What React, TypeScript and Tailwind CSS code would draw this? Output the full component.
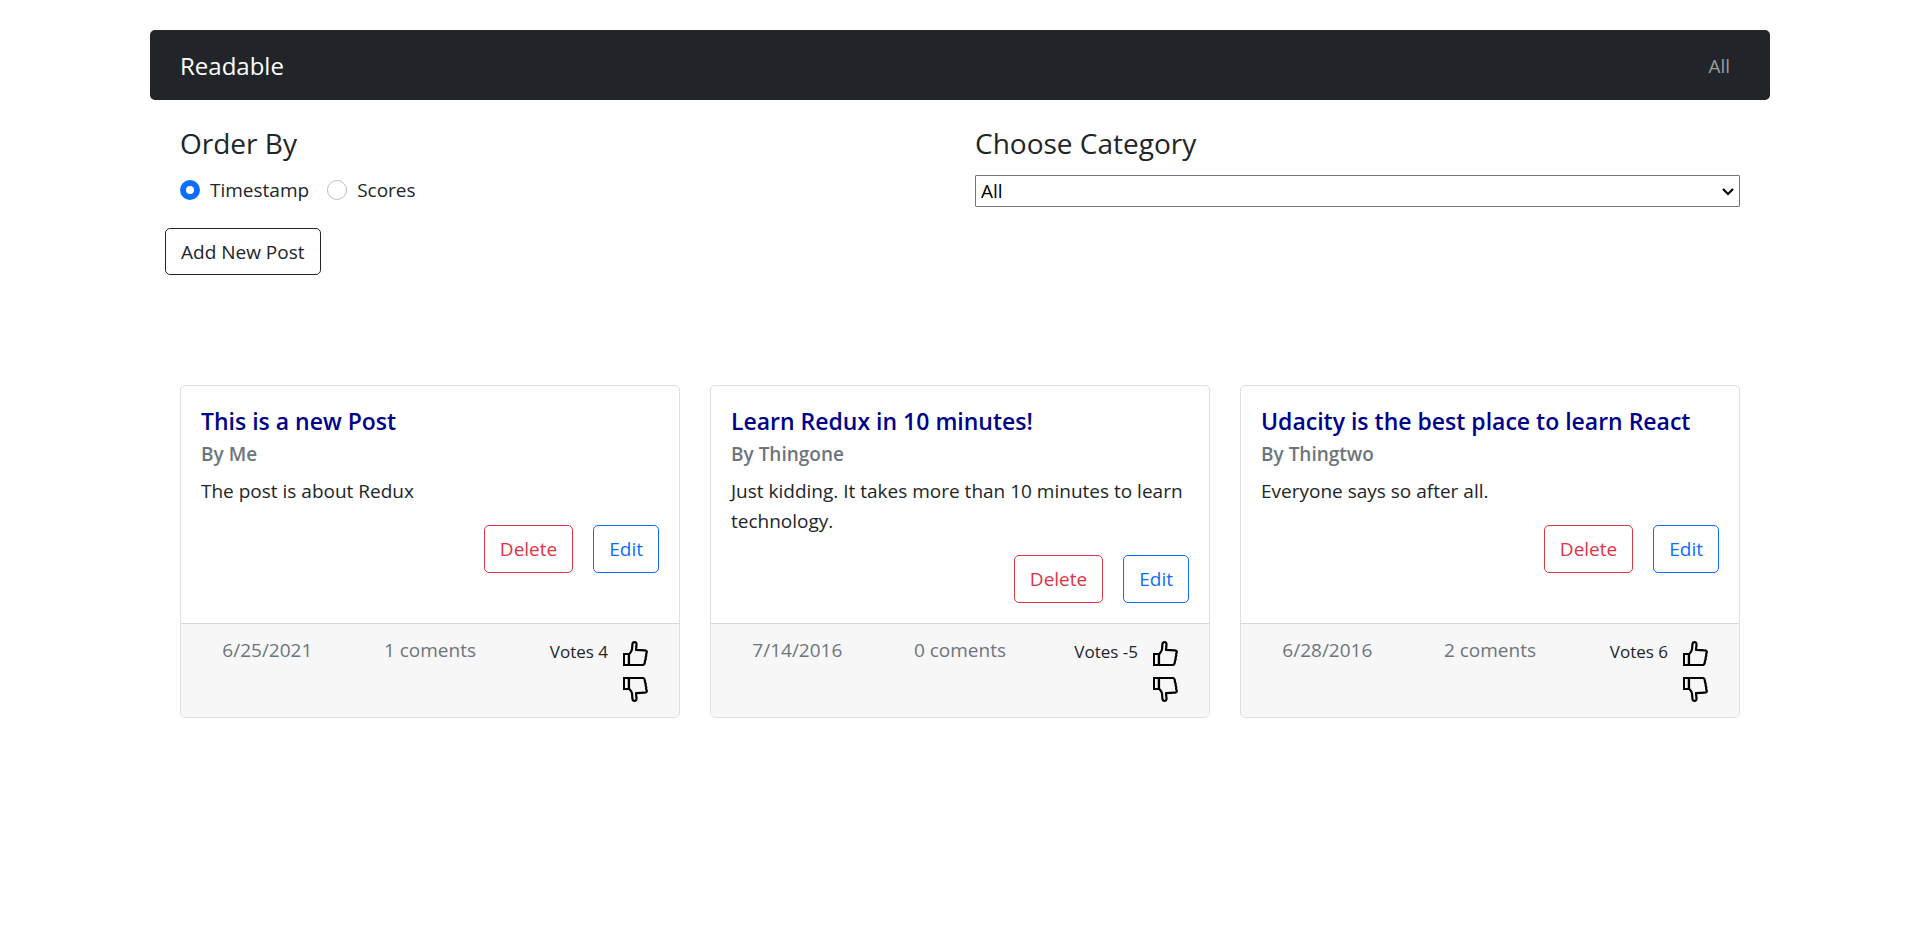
import { useState } from "react";

type Post = {
  id: string;
  title: string;
  author: string;
  body: string;
  date: string;
  comments: number;
  votes: number;
};

const posts: Post[] = [
  { id: "a", title: "This is a new Post", author: "Me", body: "The post is about Redux", date: "6/25/2021", comments: 1, votes: 4 },
  { id: "b", title: "Learn Redux in 10 minutes!", author: "Thingone", body: "Just kidding. It takes more than 10 minutes to learn technology.", date: "7/14/2016", comments: 0, votes: -5 },
  { id: "c", title: "Udacity is the best place to learn React", author: "Thingtwo", body: "Everyone says so after all.", date: "6/28/2016", comments: 2, votes: 6 },
];

function Thumb({ down = false }: { down?: boolean }) {
  return (
    <svg viewBox="0 0 25 25" className={down ? "block size-[25px] -scale-y-100" : "block size-[25px]"} fill="none" stroke="#000" strokeWidth="2" strokeLinejoin="round" aria-hidden="true">
      <path d="M1 13H5.8V24H1Z" strokeLinejoin="miter" />
      <path d="M6 24V13.4C7.6 11.6 8.6 10.4 9 8.6L9.4 3.4C9.6 1.8 10.4 1.1 11.5 1.1C12.8 1.1 13.6 2 13.5 3.6L13 8.8L21.6 9.3C23.3 9.4 24 10.2 23.8 11.4L23.1 13L23.3 14.8L22.6 16.4L22.7 18.2L22 19.8L21.8 21.8C21.5 23.3 20.8 24 19.6 24Z" strokeWidth="2.2" />
    </svg>
  );
}

function PostCard({ post }: { post: Post }) {
  const [votes, setVotes] = useState(post.votes);
  return (
    <article className="flex flex-col overflow-hidden rounded-[5px] border border-[#dfdfdf]">
      <div className="flex-1 p-5">
        <h2 className="mb-1.5 text-[23px]/[30px] font-semibold text-[#00008b]">{post.title}</h2>
        <h3 className="mb-2.5 text-[19px]/6 font-semibold text-[#6c757d]">By {post.author}</h3>
        <p className="mb-[19px] text-[19px]/[30px]">{post.body}</p>
        <div className="flex justify-end gap-5">
          <button type="button" className="h-12 rounded-[5px] border border-[#dc3545] px-[15px] text-[19px]/[30px] text-[#dc3545]">Delete</button>
          <button type="button" className="h-12 rounded-[5px] border border-[#0d6efd] px-[15px] text-[19px]/[30px] text-[#0d6efd]">Edit</button>
        </div>
      </div>
      <footer className="grid grid-cols-3 border-t border-[#d8d8d8] bg-[#f7f7f7] px-[5px] pt-2.5 pb-[15px] text-center">
        <span className="text-[19px]/8 text-[#6c757d]">{post.date}</span>
        <span className="text-[19px]/8 text-[#6c757d]">{post.comments} coments</span>
        <div className="flex justify-end gap-[15px] pt-[7px] pr-[26px]">
          <span className="text-[17px]/[22px]">Votes {votes}</span>
          <div className="flex flex-col gap-[11px]">
            <button type="button" aria-label="Vote up" onClick={() => setVotes(votes + 1)}><Thumb /></button>
            <button type="button" aria-label="Vote down" onClick={() => setVotes(votes - 1)}><Thumb down /></button>
          </div>
        </div>
      </footer>
    </article>
  );
}

const radio =
  "size-5 appearance-none rounded-full border border-[#bfbfbf] bg-white checked:border-[6px] checked:border-[#0d6efd]";

export default function App() {
  const [order, setOrder] = useState("timestamp");
  return (
    <div className="mx-auto max-w-[1650px] px-[15px] pt-[30px] font-['Open_Sans','Noto_Sans',sans-serif] text-[#212529]">
      <nav className="flex h-[70px] items-center justify-between rounded-[5px] bg-[#212529] px-[30px] pt-0.5">
        <a href="#" className="text-2xl text-white">Readable</a>
        <a href="#" className="px-2.5 text-[19px] text-[#9b9d9f]">All</a>
      </nav>
      <section className="grid grid-cols-2 gap-[30px] px-[30px] pt-6">
        <fieldset>
          <legend className="mb-[11px] text-[28px]/[38px]">Order By</legend>
          <div className="flex h-[34px] items-center gap-[18px] text-[19px]/[30px]">
            <label className="flex items-center gap-2.5">
              <input type="radio" name="order" className={radio} checked={order === "timestamp"} onChange={() => setOrder("timestamp")} />
              Timestamp
            </label>
            <label className="flex items-center gap-2.5">
              <input type="radio" name="order" className={radio} checked={order === "scores"} onChange={() => setOrder("scores")} />
              Scores
            </label>
          </div>
        </fieldset>
        <div>
          <label htmlFor="category" className="mb-[13px] block text-[28px]/[38px]">Choose Category</label>
          <div className="relative">
            <select id="category" className="block h-8 w-full appearance-none rounded-[1px] border border-[#767676] bg-white pr-6 pl-[5px] text-[19px] text-black">
              <option>All</option>
              <option>react</option>
              <option>redux</option>
              <option>udacity</option>
            </select>
            <svg viewBox="0 0 12 8" className="pointer-events-none absolute top-[13px] right-[6px] h-2 w-3" fill="none" stroke="#000" strokeWidth="2.2" aria-hidden="true">
              <path d="M1 1L6 6L11 1" />
            </svg>
          </div>
        </div>
      </section>
      <div className="px-[15px] pt-[21px]">
        <button type="button" className="h-[47px] rounded-[5px] border border-[#212529] px-[15px] text-[19px]/[30px]">Add New Post</button>
      </div>
      <main className="grid grid-cols-3 gap-[30px] px-[30px] pt-[110px] pb-8">
        {posts.map((post) => (
          <PostCard key={post.id} post={post} />
        ))}
      </main>
    </div>
  );
}
